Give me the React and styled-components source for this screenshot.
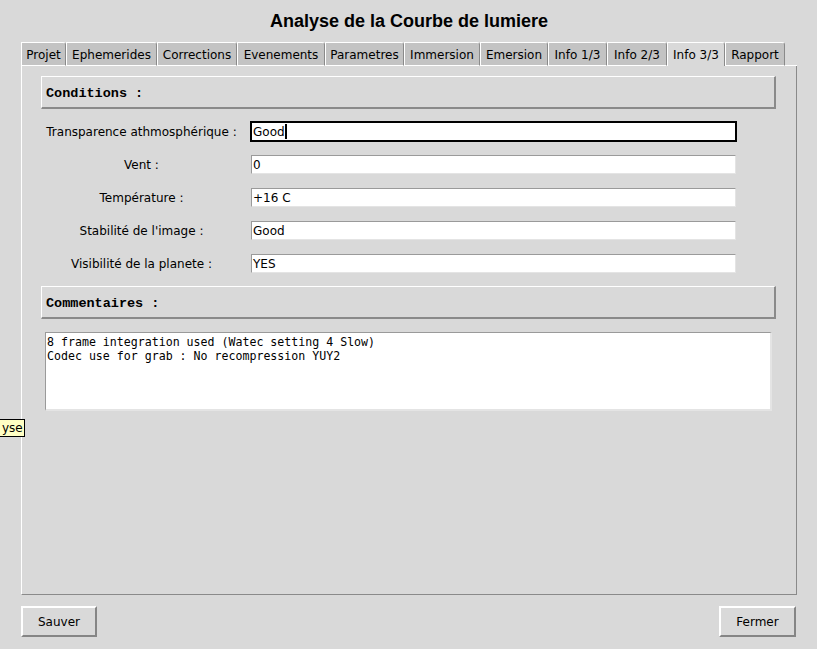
import React from "react";
import styled, { createGlobalStyle, css } from "styled-components";

const Global = createGlobalStyle`
  html, body { margin: 0; padding: 0; background: #d9d9d9; }
  body { font-family: "DejaVu Sans", sans-serif; font-size: 12px; color: #000; }
  * { box-sizing: border-box; }
`;

const Window = styled.div`
  position: relative;
  width: 817px;
  height: 649px;
  background: #d9d9d9;
  display: flex;
  flex-direction: column;
  padding: 0 20px 12px 21px;
  overflow: hidden;
`;

const Title = styled.h1`
  margin: 0;
  height: 42px;
  display: flex;
  align-items: center;
  justify-content: center;
  font-family: "Liberation Sans", Arial, sans-serif;
  font-weight: bold;
  font-size: 18px;
  padding-top: 1px;
`;

const TabBar = styled.div`
  display: flex;
  height: 24px;
  align-items: stretch;
`;

const Tab = styled.div`
  width: ${(p) => p.$w}px;
  height: 24px;
  padding-top: 2px;
  display: flex;
  align-items: center;
  justify-content: center;
  font-size: 12px;
  white-space: nowrap;
  border-top: 1px solid #ffffff;
  border-left: 1px solid #ffffff;
  border-right: 1px solid #8a8a8a;
  border-top-right-radius: 3px;
  background: #c3c3c3;
  ${(p) =>
    p.$active
      ? css`
          background: #d9d9d9;
          border-bottom: none;
        `
      : css`
          border-bottom: 1px solid #ffffff;
        `}
`;

const TabFill = styled.div`
  flex: 1;
  border-bottom: 1px solid #ffffff;
`;

const Panel = styled.div`
  height: 530px;
  border-left: 1px solid #ffffff;
  border-right: 1px solid #8a8a8a;
  border-bottom: 1px solid #8a8a8a;
  padding: 10px 20px 0 19px;
  display: flex;
  flex-direction: column;
  gap: 13px;
`;

const SectionHeader = styled.div`
  height: 33px;
  border-top: 1px solid #ffffff;
  border-left: 1px solid #ffffff;
  border-right: 2px solid #8a8a8a;
  border-bottom: 2px solid #8a8a8a;
  display: flex;
  align-items: center;
  padding: 3px 0 0 4px;
  font-family: "Liberation Mono", "Courier New", monospace;
  font-weight: bold;
  font-size: 13.5px;
`;

const Form = styled.div`
  display: flex;
  flex-direction: column;
  gap: 14px;
`;

const Row = styled.div`
  display: grid;
  grid-template-columns: 201px 485px;
  column-gap: 9px;
  align-items: center;
  height: 19px;
`;

const Label = styled.div`
  text-align: center;
  font-size: 12px;
  white-space: nowrap;
  padding-top: 2px;
`;

const Field = styled.div`
  height: 19px;
  background: #ffffff;
  border-top: 1px solid #9a9a9a;
  border-left: 1px solid #9a9a9a;
  border-right: 1px solid #e4e4e4;
  border-bottom: 1px solid #e4e4e4;
  display: flex;
  align-items: center;
  padding: 2px 0 0 1px;
  font-size: 12px;
  ${(p) =>
    p.$focused &&
    css`
      border: 1px solid #000;
      box-shadow: 0 0 0 1px #000;
    `}
`;

const Caret = styled.span`
  display: inline-block;
  width: 2px;
  height: 15px;
  margin-top: -2px;
  background: #000;
`;

const CommentBox = styled.div`
  margin: 0 4px;
  height: 79px;
  background: #ffffff;
  border-top: 1px solid #9a9a9a;
  border-left: 1px solid #9a9a9a;
  border-right: 2px solid #e4e4e4;
  border-bottom: 2px solid #e4e4e4;
  padding: 2px 1px;
  font-family: "DejaVu Sans Mono", monospace;
  font-size: 11.6px;
  line-height: 14px;
  white-space: pre;
`;

const Footer = styled.div`
  margin-top: 11px;
  display: flex;
  justify-content: space-between;
`;

const Button = styled.button`
  width: ${(p) => p.$w}px;
  height: 31px;
  background: #d9d9d9;
  border-top: 2px solid #ffffff;
  border-left: 2px solid #ffffff;
  border-right: 2px solid #858585;
  border-bottom: 2px solid #858585;
  font-family: "DejaVu Sans", sans-serif;
  font-size: 12px;
  color: #000;
  padding: 0;
  margin-right: ${(p) => p.$mr || 0}px;
`;

const Tooltip = styled.div`
  position: absolute;
  left: -1px;
  top: 419px;
  height: 18px;
  padding: 0 1px 0 2px;
  display: flex;
  align-items: center;
  background: #ffffc4;
  border: 1px solid #000;
  font-size: 12px;
`;

const tabs = [
  ["Projet", 45],
  ["Ephemerides", 91],
  ["Corrections", 80],
  ["Evenements", 88],
  ["Parametres", 79],
  ["Immersion", 76],
  ["Emersion", 68],
  ["Info 1/3", 59],
  ["Info 2/3", 60],
  ["Info 3/3", 58],
  ["Rapport", 60],
];

const fields = [
  ["Vent :", "0"],
  ["Température :", "+16 C"],
  ["Stabilité de l'image :", "Good"],
  ["Visibilité de la planete :", "YES"],
];

export default function App() {
  return (
    <>
      <Global />
      <Window>
        <Title>Analyse de la Courbe de lumiere</Title>
        <TabBar>
          {tabs.map(([t, w]) => (
            <Tab key={t} $w={w} $active={t === "Info 3/3"}>
              {t}
            </Tab>
          ))}
          <TabFill />
        </TabBar>
        <Panel>
          <SectionHeader>Conditions :</SectionHeader>
          <Form>
            <Row>
              <Label>Transparence athmosphérique :</Label>
              <Field $focused>
                Good
                <Caret />
              </Field>
            </Row>
            {fields.map(([l, v]) => (
              <Row key={l}>
                <Label>{l}</Label>
                <Field>{v}</Field>
              </Row>
            ))}
          </Form>
          <SectionHeader>Commentaires :</SectionHeader>
          <CommentBox>
            {"8 frame integration used (Watec setting 4 Slow)\nCodec use for grab : No recompression YUY2"}
          </CommentBox>
        </Panel>
        <Footer>
          <Button $w={76}>Sauver</Button>
          <Button $w={77} $mr={1}>Fermer</Button>
        </Footer>
        <Tooltip>yse</Tooltip>
      </Window>
    </>
  );
}
